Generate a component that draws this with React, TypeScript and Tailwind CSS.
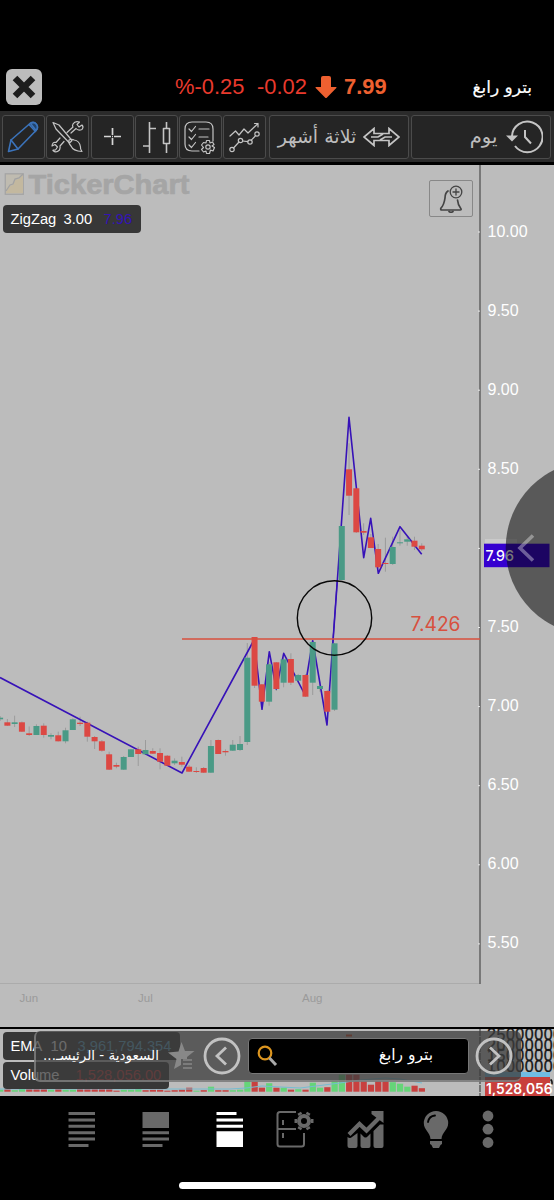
import React from "react";

type Candle = [number, number, number, number, number];

// [top, bottom, wickTop, wickBottom, rising]
const candles: Candle[] = [
  [717.7, 719.3, 716, 721, 1], [722.3, 725.7, 719, 726, 0], [722.3, 724, 715.7, 727, 1], [722.3, 731.7, 721.5, 732, 0],
  [733.3, 735, 726.5, 736, 0], [726, 735, 724.3, 735, 1], [725.7, 735, 723.3, 737.7, 0], [735, 736.7, 733.3, 739.3, 1],
  [735.3, 741.3, 731.7, 741.5, 0], [730.3, 741.3, 727.7, 743.3, 1], [719.3, 730, 718.3, 730, 1], [722.7, 724, 716.7, 726, 0],
  [722.7, 736.7, 721.7, 741.7, 0], [737, 741.3, 736, 749, 0], [741.3, 750.7, 740, 751.7, 0], [754.3, 769.7, 751.7, 770, 0],
  [765, 766.7, 762.7, 768.3, 0], [757, 769.7, 756, 770, 1], [749.3, 757, 749, 757, 1], [749.3, 754, 746.7, 766, 0],
  [750, 754.3, 740, 755, 1], [751, 753.7, 748.3, 754, 0], [753, 761.7, 748.3, 769.3, 0], [755.7, 765.7, 755, 766, 0],
  [760.7, 763.3, 758.3, 765, 1], [762, 764.7, 756.7, 766.7, 0], [766.7, 771.7, 765, 772, 0], [771, 772, 767.3, 773, 0],
  [768, 772.7, 767, 773, 0], [746, 772.7, 740, 773, 1], [740, 754, 739.5, 754, 0], [751, 752.3, 749.3, 755.7, 0],
  [744.7, 750.7, 740, 751, 1], [744, 750, 736, 751, 1], [657.7, 742, 643, 745, 1], [637, 685.7, 637, 688, 0],
  [684.3, 701.7, 684, 703, 0], [664.3, 701.7, 661.7, 705.7, 1], [662.3, 689, 662, 691, 0], [659.3, 682.7, 656.7, 687.3, 1],
  [659, 682.7, 653.3, 685, 0], [675, 680.7, 674, 683, 1], [675, 696.7, 674, 697, 0], [642, 682.7, 640, 695, 1],
  [686, 689, 681.7, 691.7, 1], [691, 711.7, 690, 712, 0], [643.3, 709.7, 643, 711, 1], [526, 580, 526, 580, 1],
  [469.3, 495.7, 443.3, 515, 0], [488.3, 532.3, 488, 533, 0], [531, 532.7, 523.3, 535, 0], [537.3, 548, 534, 548, 0],
  [549, 567.3, 544, 568, 0], [563, 564, 537.7, 571.7, 0], [547, 564, 536.7, 565, 1], [542.3, 543.3, 530, 545.7, 1],
  [539.3, 541.7, 536.7, 545.7, 1], [540.7, 546.7, 536.7, 550, 0], [545.7, 549.3, 543.3, 551, 0],
];

// [height, rising] per session
const volumes: [number, number][] = [
  [2, 1], [2.5, 0], [1.5, 1], [3, 1], [6, 0], [4, 0], [3, 0], [2, 1], [3, 0], [2, 1], [2, 1], [3, 0], [3, 0], [3, 0], [3, 0],
  [6, 0], [1, 0], [2, 1], [2, 1], [3, 1], [1.5, 0], [2, 0], [2, 0], [1, 0], [1.5, 0], [2, 0], [4, 0], [1, 1], [1.5, 0], [5, 1],
  [1.5, 0], [1.5, 0], [1.5, 1], [2, 1], [11, 1], [10, 0], [4, 0], [8.5, 1], [4, 0], [4, 1], [2, 0], [2.5, 1], [2, 0],
  [9, 1], [4, 1], [4.5, 0], [11, 1], [17, 1], [17, 0], [17, 0], [10.5, 0], [7, 0], [10.5, 0], [10.5, 0],
  [9.5, 1], [8, 1], [5, 1], [6, 0], [3.5, 0],
];

const RED = "#dc4843";
const GREEN = "#4a9a86";
const px = (i: number) => 7.27 * i + 0.1;
const arial = "'Liberation Sans', Arial, sans-serif";

function PriceChart() {
  const labels = ["10.00", "9.50", "9.00", "8.50", "", "7.50", "7.00", "6.50", "6.00", "5.50"];
  return (
    <svg className="block" width="554" height="862" viewBox="0 165 554 862" fontFamily={arial}>
      <rect y="165" width="554" height="862" fill="#bcbcbc" />
      <g>
        <rect x="5.3" y="173.8" width="18" height="20.5" fill="#bfbbb0" stroke="#a5a5a5" strokeWidth="1.3" />
        <path d="M6 192 l4-6 3-1 2-5 4-1 4-4 v18 h-17z" fill="#c3b89f" />
        <path d="M6 191 l4-6 3-1 2-5 4-1 4-4" fill="none" stroke="#a2a2a2" strokeWidth="1.3" />
        <text x="28.5" y="194" fontSize="28" fontWeight="bold" fill="#a5a5a5" stroke="#a5a5a5" strokeWidth="0.7" textLength="161" lengthAdjust="spacingAndGlyphs">TickerChart</text>
      </g>
      <path d="M0 983.5H480" stroke="#ababab" strokeWidth="1.2" />
      <path d="M480 165V984" stroke="#626262" strokeWidth="1.5" />
      {labels.map((t, i) => (
        <g key={i}>
          <path d={`M478 ${232 + i * 79.1}h2`} stroke="#e8e8e8" strokeWidth="1" />
          <text x="487.5" y={236.5 + i * 79.1} fontSize="16" fill="#fff">{t}</text>
        </g>
      ))}
      {candles.map(([, , wt, wb], i) => (
        <path key={i} d={`M${px(i)} ${wt}V${wb}`} stroke="#858585" strokeWidth="0.6" />
      ))}
      <polyline
        points="0,677.5 182,773 254,640 262,709.3 269.3,651.7 276.3,689 283.7,653.3 304,693 312.7,640.7 327,725 349,417.3 363.7,557.7 370.7,518.3 378.3,573.3 400,526.7 421.7,554.3"
        fill="none" stroke="#3712b8" strokeWidth="1.6" strokeLinejoin="round"
      />
      {candles.map(([t, b, , , up], i) => (
        <rect key={i} x={px(i) - 3} y={t} width="6" height={b - t} fill={up ? GREEN : RED} />
      ))}
      <path d="M332.8 643L337.3 580" stroke="#3712b8" strokeWidth="1.2" />
      <path d="M182 639H480" stroke="#d8503e" strokeWidth="1.5" />
      <text x="410.5" y="631" fontSize="19.5" fill="#d8503e" fontFamily="Inter, sans-serif" textLength="50" lengthAdjust="spacingAndGlyphs">7.426</text>
      <circle cx="334.5" cy="618" r="37.2" fill="none" stroke="#080808" strokeWidth="1.4" />
      <g fontSize="11.5" fill="#9a9a9a">
        <text x="19.5" y="1002">Jun</text>
        <text x="138" y="1002">Jul</text>
        <text x="302" y="1002">Aug</text>
      </g>
      <rect x="485" y="539" width="32" height="4.5" fill="#cacaca" />
      <rect x="484" y="543.7" width="65.5" height="23.5" fill="#3500d0" />
      <text x="485.5" y="560.5" fontSize="14.5" fill="#fff" fontFamily="Inter, sans-serif" fontWeight="500" textLength="28.5" lengthAdjust="spacingAndGlyphs">7.96</text>
      <circle cx="593" cy="548" r="87.3" fill="#080808" fillOpacity="0.55" />
      <path d="M533 535.5L520 548L533 560.5" fill="none" stroke="#fff" strokeOpacity="0.36" strokeWidth="3.6" />
    </svg>
  );
}

function VolumeChart() {
  return (
    <svg className="block" width="554" height="67" viewBox="0 1029 554 67">
      <rect y="1029" width="554" height="67" fill="#bcbcbc" />
      <rect x="346" y="1034.5" width="6" height="2" fill="#cc3d16" />
      {volumes.map(([h, up], i) => (
        <rect key={i} x={px(i) - 3} y={1091.7 - h} width="6.2" height={h} fill={up ? "#65d578" : "#c8403f"} />
      ))}
      <path d="M0 1089H230L246 1088L262 1086L300 1088L340 1083L360 1080L385 1078L400 1079L422 1083" fill="none" stroke="#76bcd2" strokeWidth="1" />
      <path d="M480 1029V1096" stroke="#444" strokeWidth="1.2" strokeDasharray="7 1" />
      <g fontSize="16" fill="#151515" stroke="#151515" strokeWidth="0.3" fontFamily={arial}>
        <text x="487" y="1040" textLength="75">25000000</text>
        <text x="487" y="1050.5" textLength="75">20000000</text>
        <text x="487" y="1061" textLength="75">15000000</text>
        <text x="487" y="1072" textLength="75">10000000</text>
      </g>
      <path d="M550.500 1079.500q2 1 1.500 5" fill="none" stroke="#151515" strokeWidth="1.500" />
      <rect x="485" y="1072" width="65" height="5" fill="#70bce3" />
      <rect x="485" y="1077" width="65" height="19" fill="#c83f3c" />
      <text x="486" y="1094.3" fontSize="14.5" fontWeight="600" fill="#fff" fontFamily="Inter, sans-serif" textLength="66.5" lengthAdjust="spacingAndGlyphs">1,528,056</text>
    </svg>
  );
}

function Tool({ children }: { children: React.ReactNode }) {
  return (
    <button className="h-[44px] w-[43px] shrink-0 rounded-[3px] border border-[#4b4b4b] bg-[#252525]">
      <svg className="block" width="41" height="42" viewBox="1 1 41 42" fill="none" stroke="#c4c4c4" strokeWidth="1.2" strokeLinejoin="round" strokeLinecap="round">
        {children}
      </svg>
    </button>
  );
}

function Toolbar() {
  return (
    <div dir="ltr" className="flex h-[51px] items-center gap-[1.3px] bg-[#2b2b2b] pl-[2px]">
      <Tool>
        <g stroke="#3b73ba" strokeWidth="1.6">
          <path d="M6.5 36.5L9 25L28 8.5Q32 6 34.5 9.5Q37 13 33.5 16L16 34Z" />
          <path d="M9 25L16 34" />
          <path d="M27 9.5L33.5 16.5" /><path d="M28.5 8.5Q32 6.5 34.5 9.5Q36.5 12.5 34 15.5Z" fill="#20446e" />
        </g>
      </Tool>
      <Tool>
        <path d="M25 18L30 13.5Q32 16 36 14.5Q38 12 36 10L33 12L31 9.5L33.5 7Q29 5.500 27 9Q26 11 27 12L21 17.500M14 23L10 27.500Q6.500 26.500 6 31L9 29.500L11.500 32L9.500 35Q6.500 35 7 35.500Q10 38.500 13.500 35Q14.500 32.500 14 31L18 26.500" />
        <path d="M7 7.500L13 10L26 25.500L23.500 28L10 14Z" />
        <path d="M23 25Q22 28 25 31Q27 36 36 36.500Q34 34 34.500 32Q33.500 25.500 28 25Q26 23.500 23 25Z" />
      </Tool>
      <Tool>
        <path strokeWidth="1.7" stroke="#d6d6d6" strokeLinecap="butt" d="M13 21.500H20M23 21.500H30M21.500 13V20M21.500 23V30M21 21.500H22" />
      </Tool>
      <Tool>
        <path strokeWidth="1.6" strokeLinecap="butt" d="M14.500 7V38M14.500 13.500H21M8 31H14.500M31.500 7V13M31.500 29V38M28.500 13.500H34.500V28.500H28.500Z" />
      </Tool>
      <Tool>
        <path d="M20 36H13Q6 36 6 29V14Q6 7 13 7H27Q34 7 34 14V26" />
        <path d="M10 14L12.500 16.500L16.500 11.500M10 22L12.500 24.500L16.500 19.500M10 30L12.500 32.500L16.500 27.500M20 14H30M20 22H29" />
        <circle cx="29" cy="32" r="2.200" />
        <path d="M27.500 25.500H30.500L31 28L33.500 27L35 29.500L33 31L35.500 32.500L34 36L31.500 35L30.500 38.500H27.500L27 36L24.500 37L22.500 34.500L24.500 32.500L22.500 30L24.500 27.500L27 28Z" />
      </Tool>
      <Tool>
        <path d="M7 21L12.500 16L16 20L21 14L25 18L35 8.500M31.500 8.500H35V12" />
        <circle cx="9" cy="34.500" r="2.200" /><circle cx="17.500" cy="25.500" r="2.200" /><circle cx="27" cy="27" r="2.200" /><circle cx="34" cy="19" r="2.200" />
        <path d="M10.500 33L16 27M19.700 26L24.800 26.700M28.300 25.200L32.600 20.700" />
      </Tool>
      <button className="ml-[1.500px] flex h-[44px] w-[140px] shrink-0 items-center justify-end gap-[7px] rounded-[3px] border border-[#4b4b4b] bg-[#252525] pr-[8px]">
        <span dir="rtl" className="whitespace-nowrap font-['DejaVu_Sans',sans-serif] text-[19px] leading-none text-[#bdbdbd]">ثلاثة أشهر</span>
        <svg className="shrink-0" width="37" height="20" viewBox="0 0 37 20" fill="none" stroke="#c4c4c4" strokeWidth="1.700">
          <path d="M11 6.500V1.500L1 10L11 18.500V13.500H26V18.500L36 10L26 1.500V6.500ZM8 10H15L20 7M17 13L22 10H29" />
        </svg>
      </button>
      <button className="ml-[0.800px] flex h-[44px] w-[140px] shrink-0 items-center justify-end gap-[9px] rounded-[3px] border border-[#4b4b4b] bg-[#252525] pr-[7px]">
        <span dir="rtl" className="font-['DejaVu_Sans',sans-serif] text-[19.500px] leading-none text-[#bdbdbd]">يوم</span>
        <svg className="shrink-0" width="37" height="34" viewBox="0 0 37 34" fill="none" stroke="#c4c4c4" strokeWidth="2">
          <path d="M6 16A15.300 15.300 0 1 1 9 26" /><path d="M0 15.500H12L6 21.500Z" fill="#c4c4c4" stroke="none" /><path d="M19 10V17L25 23.500" />
        </svg>
      </button>
    </div>
  );
}

function IndicatorTag({ className, children }: { className: string; children: React.ReactNode }) {
  return <div className={"absolute flex items-center whitespace-nowrap rounded-[4px] bg-[#373737] text-[14.700px] leading-none text-white " + className}>{children}</div>;
}

function QuoteBar() {
  return (
    <div className="absolute left-[34px] top-[2px] flex h-[51px] w-[487px] items-center rounded-[6px] border-b-2 border-l-2 border-[#a6a6a688] bg-[#3d3d3dc2]">
      <span dir="rtl" className="ml-[7px] w-[116px] whitespace-nowrap text-center font-['DejaVu_Sans',sans-serif] text-[13.500px] text-white">السعودية - الرئيسـ...</span>
      <svg className="ml-[9px] shrink-0" width="27" height="28" viewBox="0 0 27 28" fill="#888">
        <path d="M13.500 0L17 9H26.500L19 15V17H13V23L6 27L8.500 17L0 10.500L10.500 9.500Z" />
        <path d="M15 18H24M15 22H24M15 26H24" stroke="#888" strokeWidth="1.500" />
      </svg>
      <svg className="ml-[8px] shrink-0" width="38" height="38" viewBox="0 0 38 38" fill="none" stroke="#c2c2c2" strokeWidth="2.800">
        <circle cx="19" cy="19" r="17" /><path d="M23 10.500L14 19L23 27.500" />
      </svg>
      <div className="ml-[7px] flex h-[36px] w-[221px] shrink-0 items-center justify-between rounded-[4px] border border-[#777] bg-black pl-[8px] pr-[35px]">
        <svg width="21" height="22" viewBox="0 0 21 22" fill="none">
          <circle cx="8" cy="8" r="6.300" stroke="#dc951f" strokeWidth="2.200" /><path d="M12.500 13L19 20" stroke="#aaa" strokeWidth="3" />
        </svg>
        <span dir="rtl" className="font-['DejaVu_Sans',sans-serif] text-[15.500px] text-white">بترو رابغ</span>
      </div>
      <svg className="ml-[6px] shrink-0" width="38" height="38" viewBox="0 0 38 38" fill="none" stroke="#c2c2c2" strokeWidth="2.800">
        <circle cx="19" cy="19" r="17" /><path d="M15 10.500L24 19L15 27.500" />
      </svg>
    </div>
  );
}

function NavBar() {
  return (
    <nav className="flex h-[74px] items-center pb-[8px] pl-[68px] text-[#696969]">
      <svg width="28" height="37" viewBox="0 0 28 37" fill="currentColor">
        <path d="M.5 1H27V4H.5ZM.5 7.400H27V10.400H.5ZM.5 13.800H27V16.800H.5ZM.5 20.200H27V23.200H.5ZM.5 26.600H27V29.600H.5ZM.5 33H20.500V36H.5Z" />
      </svg>
      <svg className="ml-[46px]" width="28" height="37" viewBox="0 0 28 37" fill="currentColor">
        <path d="M.5 1H27V17H.5ZM.5 20.200H27V23.200H.5ZM.5 26.600H27V29.600H.5ZM.5 33H20.500V36H.5Z" />
      </svg>
      <svg className="ml-[46px]" width="28" height="37" viewBox="0 0 28 37" fill="white">
        <path d="M.5 1H20.500V4H.5ZM.5 7.400H27V10.400H.5ZM.5 13.800H27V16.800H.5ZM.5 20.200H27V36H.5Z" />
      </svg>
      <svg className="ml-[32px]" width="38" height="38" viewBox="0 0 38 38" fill="none" stroke="currentColor" strokeWidth="2">
        <path d="M20 2H4Q1.500 2 1.500 4.500V34Q1.500 36.500 4 36.500H25.500Q28 36.500 28 34V23M1.500 19H20M7 10V15M7 23V28" />
        <circle cx="28" cy="11" r="5" strokeWidth="4" />
        <path strokeWidth="4" d="M35 11H37.500M31.500 17.100L32.800 19.200M24.500 17.100L23.200 19.200M21 11H18.500M24.500 4.900L23.200 2.800M31.500 4.900L32.800 2.800" />
      </svg>
      <svg className="ml-[33px]" width="37" height="38" viewBox="0 0 37 38" fill="currentColor">
        <path d="M.5 27Q3 29 5 27L10.500 23V36Q10.500 38 8.500 38H2.500Q.5 38 .5 36ZM13.500 23.500L17 27Q19 28.500 21 26L23.500 23.500V36Q23.500 38 21.500 38H15.500Q13.500 38 13.500 36ZM26.500 21L33 14.500H36.500V36Q36.500 38 34.500 38H28.500Q26.500 38 26.500 36Z" />
        <path d="M2 24.500L12.500 14L19.500 20.500L32 8" fill="none" stroke="currentColor" strokeWidth="4.200" />
        <path d="M24.500 1H36.500V13L24.500 4Z" />
      </svg>
      <svg className="ml-[38.500px]" width="26" height="39" viewBox="0 0 26 39" fill="currentColor">
        <path d="M13 1A12.200 12.200 0 0 1 25.200 13C25.200 20 19 22 18.500 29H7.500C7 22 .8 20 .8 13A12.200 12.200 0 0 1 13 1ZM7 31H19V34L17.500 35L16 38H10L8.500 35L7 34Z" />
        <path d="M5 12Q6 6 12 5.500" fill="none" stroke="#000" strokeWidth="1.800" strokeLinecap="round" />
      </svg>
      <svg className="ml-[33px]" width="12" height="38" viewBox="0 0 12 38" fill="currentColor">
        <circle cx="6" cy="6" r="5.400" /><circle cx="6" cy="19.200" r="5.400" /><circle cx="6" cy="32.500" r="5.400" />
      </svg>
    </nav>
  );
}

export default function App() {
  return (
    <main className="flex h-[1200px] w-[554px] flex-col overflow-hidden bg-black font-['Liberation_Sans',Arial,sans-serif]">
      <header className="flex h-[111px] items-end pb-[6px] pl-[6px]">
        <button className="flex h-[36px] w-[36px] items-center justify-center rounded-[6px] bg-[#bcbcbc]">
          <svg width="24" height="24" viewBox="0 0 24 24" stroke="#1d1d1d" strokeWidth="6.500"><path d="M3 3L21 21M21 3L3 21" /></svg>
        </button>
        <div className="ml-[133px] flex h-[36px] items-center whitespace-nowrap text-[21.900px] leading-none text-[#e93a2d]">
          <span className="w-[82px]">%-0.25</span>
          <span className="w-[58px]">-0.02</span>
          <svg width="22" height="24" viewBox="0 0 22 24" fill="#ee6030"><path d="M6 3Q6 1 8 1H14Q16 1 16 3V12H21Q22 12 21.300 13L12 22.500Q11 23.500 10 22.500L.7 13Q0 12 1 12H6Z" /></svg>
          <span className="ml-[7px] w-[43px] font-bold text-[#ee6030]">7.99</span>
        </div>
        <div dir="rtl" className="ml-auto mr-[22px] flex h-[36px] items-center whitespace-nowrap font-['DejaVu_Sans',sans-serif] text-[17px] leading-none text-white [-webkit-text-stroke:0.200px_white]">بترو رابغ</div>
      </header>
      <Toolbar />
      <div className="h-[3px] shrink-0 bg-black" />
      <section className="relative h-[862px] shrink-0">
        <PriceChart />
        <IndicatorTag className="left-[3px] top-[40px] h-[28px] w-[138px] pl-[7.500px]">
          <span className="w-[53px]">ZigZag</span><span className="w-[40px]">3.00</span><span className="text-[#3313b5]">7.96</span>
        </IndicatorTag>
        <button className="absolute left-[429px] top-[15px] flex h-[37px] w-[44px] items-center justify-center rounded-[2px] border border-[#888]">
          <svg width="26" height="28" viewBox="0 0 26 28" fill="none" stroke="#444" strokeWidth="1.700" strokeLinecap="round">
            <path d="M10 6Q7 8 7 13Q6 20 3 23Q2 25 4 25H22Q24 25 22.500 23Q20 20 19.500 15" />
            <circle cx="18" cy="7" r="5.800" strokeWidth="1.300" /><path d="M15 7H21M18 4V10" strokeWidth="1.300" /><path d="M11 26.500Q13 28 15 26.500" />
          </svg>
        </button>
      </section>
      <div className="h-[2px] shrink-0 bg-black" />
      <section className="relative h-[67px] shrink-0 overflow-hidden">
        <VolumeChart />
        <IndicatorTag className="left-[3px] top-[3px] h-[28px] w-[177px] pl-[7.500px]">
          <span className="w-[40px]">EMA</span><span className="w-[27px]">10</span><span className="text-[#5ca7cb]">3,961,794.354</span>
        </IndicatorTag>
        <IndicatorTag className="left-[3px] top-[33px] h-[27px] w-[166px] pl-[7.500px]">
          <span className="w-[65px]">Volume</span><span className="text-[#c83c3c]">1,528,056.00</span>
        </IndicatorTag>
        <QuoteBar />
      </section>
      <NavBar />
      <div className="mt-[11.500px] ml-[179px] h-[7px] w-[197px] rounded-full bg-white" />
    </main>
  );
}
